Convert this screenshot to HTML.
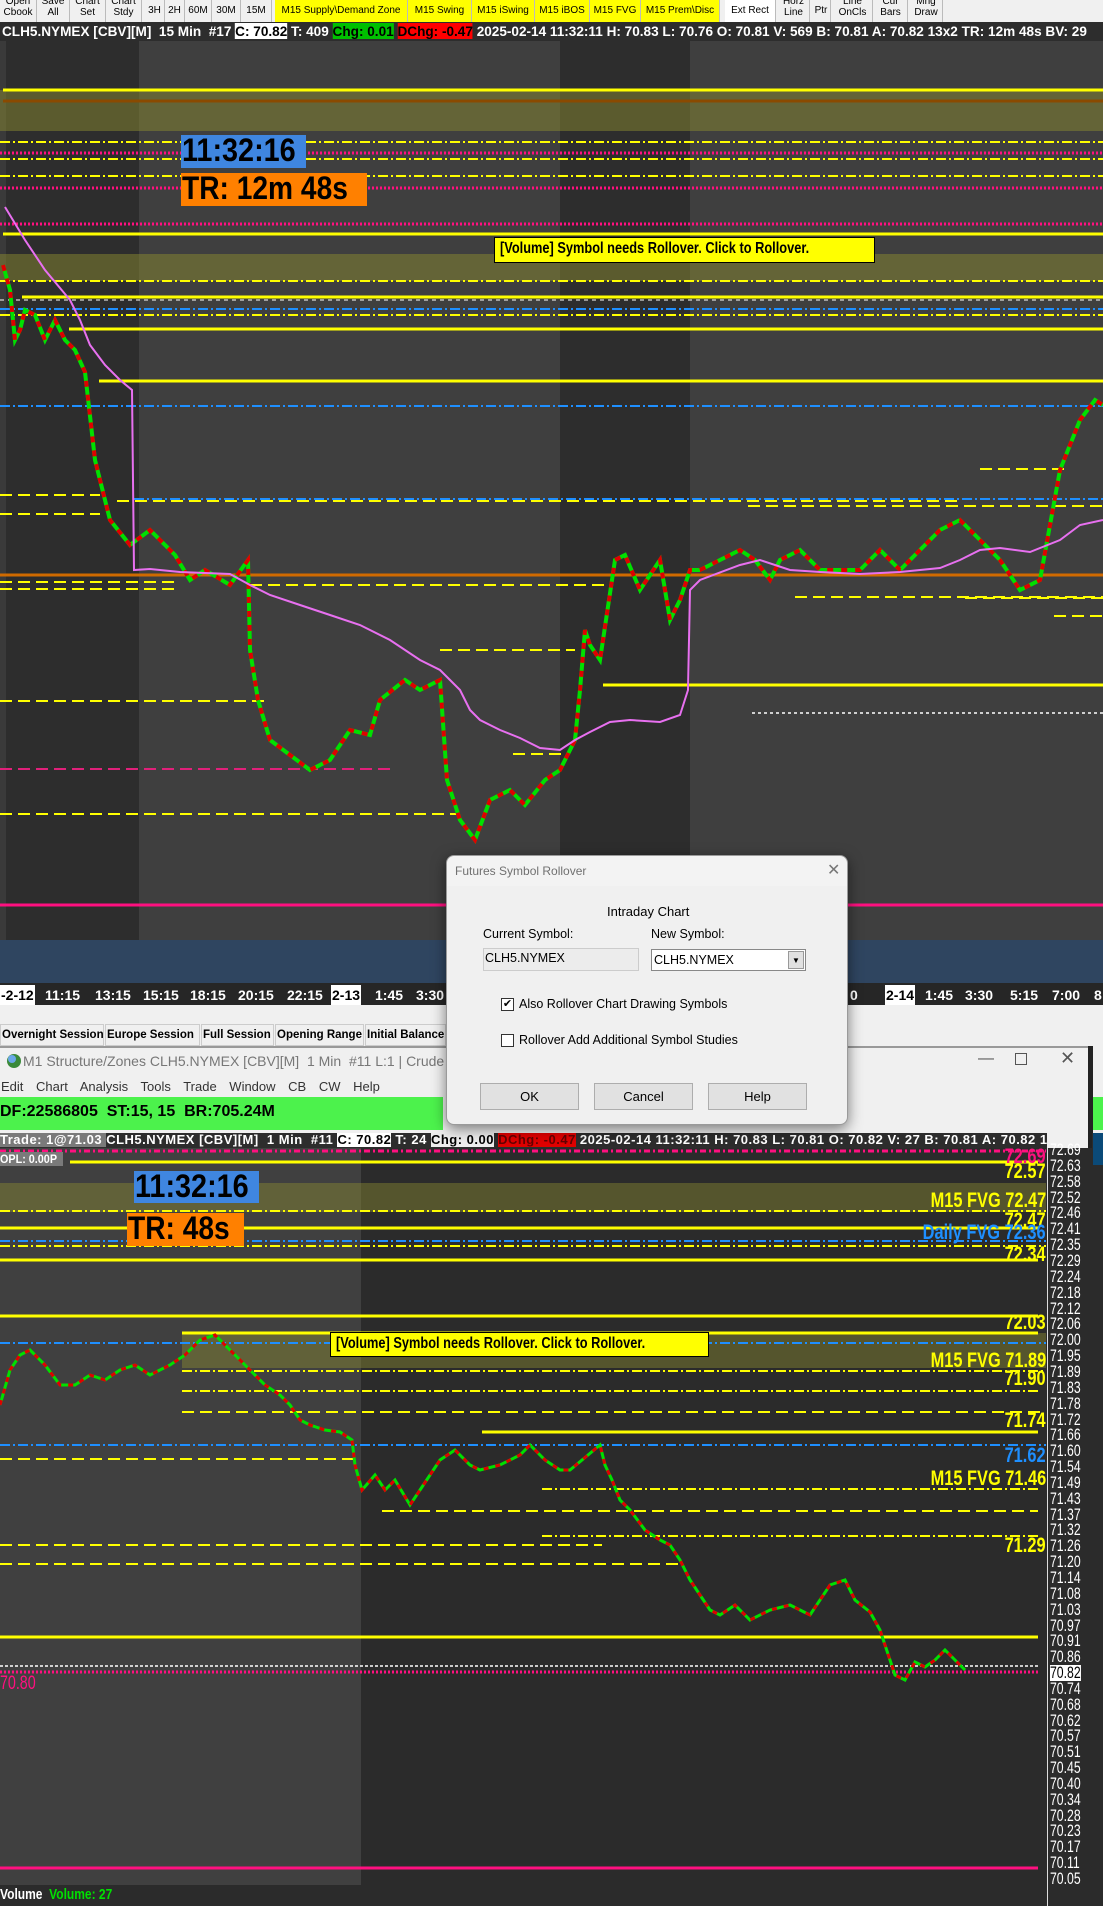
<!DOCTYPE html>
<html><head><meta charset="utf-8">
<style>
*{margin:0;padding:0;box-sizing:border-box}
body{width:1103px;height:1906px;overflow:hidden;background:#2b2b2b;position:relative;font-family:"Liberation Sans",sans-serif}
.a{position:absolute;white-space:nowrap}
.tb{position:absolute;top:0;height:22px;background:#f0f0f0;border-right:1px solid #bbb;font-size:10px;line-height:11px;text-align:center;color:#000;overflow:hidden;white-space:nowrap}
.tb span{display:block;margin-top:-4px}
.y{background:#ffff00}
.hdr{font-weight:bold;font-size:13px;color:#fff;line-height:19px;height:19px}
.lab{position:absolute;font-weight:bold;font-size:21px;color:#ffff00;transform:scaleX(.78);transform-origin:right center;right:57px;white-space:nowrap;line-height:22px}
.ax{position:absolute;left:1050px;font-size:17px;color:#fff;transform:scaleX(.72);transform-origin:left center;line-height:16px}
.sb{position:absolute;top:1024px;height:22px;background:#f0f0f0;border:1px solid #ccc;font-size:11.5px;font-weight:bold;line-height:20px;padding:0 1px;white-space:nowrap;overflow:hidden}
.btn{position:absolute;top:1083px;width:99px;height:27px;background:#e1e1e1;border:1px solid #adadad;font-size:13px;text-align:center;line-height:25px}
.chk{position:absolute;width:13px;height:13px;border:1px solid #333;background:#fff;font-size:11px;line-height:11px;text-align:center}
</style></head><body>

<svg class="a" style="left:0;top:0" width="1103" height="1906">
<rect x="0" y="41" width="1103" height="944" fill="#3f3f3f"/>
<rect x="0" y="41" width="139" height="944" fill="#2d2d2d"/>
<rect x="560" y="41" width="130" height="944" fill="#2d2d2d"/>
<rect x="0" y="41" width="6" height="944" fill="#3a3a3a"/>
<rect x="0" y="90" width="1103" height="41" fill="#8a8a30" opacity="0.5"/>
<rect x="0" y="254" width="1103" height="27" fill="#8a8a30" opacity="0.5"/>
<g stroke-width="2" fill="none">
<line x1="3" y1="90" x2="1103" y2="90" stroke="#ffff00" stroke-width="3"/>
<line x1="3" y1="101" x2="1103" y2="101" stroke="#8a4a00" stroke-width="3"/>
<line x1="0" y1="142" x2="1103" y2="142" stroke="#ffff00" stroke-dasharray="10 3 2 3"/>
<line x1="0" y1="153" x2="1103" y2="153" stroke="#ff1080" stroke-width="3" stroke-dasharray="2 2"/>
<line x1="0" y1="159" x2="1103" y2="159" stroke="#ffff00" stroke-dasharray="10 3 2 3"/>
<line x1="0" y1="176" x2="1103" y2="176" stroke="#ffff00" stroke-dasharray="10 3 2 3"/>
<line x1="0" y1="188" x2="1103" y2="188" stroke="#ff1080" stroke-width="3" stroke-dasharray="2 2"/>
<line x1="0" y1="224" x2="1103" y2="224" stroke="#ff1080" stroke-width="3" stroke-dasharray="2 2"/>
<line x1="3" y1="234" x2="1103" y2="234" stroke="#ffff00" stroke-width="3"/>
<line x1="0" y1="281" x2="1103" y2="281" stroke="#ffff00" stroke-dasharray="10 3 2 3"/>
<line x1="22" y1="297" x2="1103" y2="297" stroke="#ffff00" stroke-width="3"/>
<line x1="0" y1="300" x2="1103" y2="300" stroke="#ffffff" stroke-width="1" stroke-dasharray="4 4"/>
<line x1="0" y1="309" x2="1103" y2="309" stroke="#1e8fff" stroke-dasharray="10 3 2 3"/>
<line x1="0" y1="315" x2="1103" y2="315" stroke="#ffff00" stroke-dasharray="10 3 2 3"/>
<line x1="69" y1="329" x2="1103" y2="329" stroke="#ffff00" stroke-width="3"/>
<line x1="99" y1="381" x2="1103" y2="381" stroke="#ffff00" stroke-width="3"/>
<line x1="0" y1="406" x2="1103" y2="406" stroke="#1e8fff" stroke-dasharray="10 3 2 3"/>
<line x1="134" y1="499" x2="1103" y2="499" stroke="#1e8fff" stroke-dasharray="10 3 2 3"/>
<line x1="117" y1="501" x2="960" y2="501" stroke="#ffff00" stroke-dasharray="12 6"/>
<line x1="0" y1="495" x2="100" y2="495" stroke="#ffff00" stroke-dasharray="12 6"/>
<line x1="0" y1="514" x2="100" y2="514" stroke="#ffff00" stroke-dasharray="12 6"/>
<line x1="748" y1="506" x2="1103" y2="506" stroke="#ffff00" stroke-dasharray="12 6"/>
<line x1="980" y1="469" x2="1070" y2="469" stroke="#ffff00" stroke-dasharray="12 6"/>
<line x1="0" y1="575" x2="1103" y2="575" stroke="#d06a00" stroke-width="3"/>
<line x1="0" y1="582" x2="175" y2="582" stroke="#ffff00" stroke-dasharray="12 6"/>
<line x1="0" y1="589" x2="175" y2="589" stroke="#ffff00" stroke-dasharray="12 6"/>
<line x1="250" y1="585" x2="610" y2="585" stroke="#ffff00" stroke-dasharray="12 6"/>
<line x1="795" y1="597" x2="1103" y2="597" stroke="#ffff00" stroke-dasharray="12 6"/>
<line x1="965" y1="598" x2="1103" y2="598" stroke="#ffff00" stroke-dasharray="12 6"/>
<line x1="1054" y1="616" x2="1103" y2="616" stroke="#ffff00" stroke-dasharray="12 6"/>
<line x1="440" y1="650" x2="575" y2="650" stroke="#ffff00" stroke-dasharray="12 6"/>
<line x1="603" y1="685" x2="1103" y2="685" stroke="#ffff00" stroke-width="3"/>
<line x1="752" y1="713" x2="1103" y2="713" stroke="#ffffff" stroke-width="1.5" stroke-dasharray="3 3"/>
<line x1="0" y1="701" x2="265" y2="701" stroke="#ffff00" stroke-dasharray="12 6"/>
<line x1="513" y1="754" x2="570" y2="754" stroke="#ffff00" stroke-dasharray="12 6"/>
<line x1="0" y1="769" x2="390" y2="769" stroke="#e0207a" stroke-dasharray="12 6"/>
<line x1="0" y1="814" x2="460" y2="814" stroke="#ffff00" stroke-dasharray="12 6"/>
<line x1="0" y1="905" x2="1103" y2="905" stroke="#ff1080" stroke-width="3"/>
</g>
<rect x="0" y="940" width="1103" height="43" fill="#2f4560"/>
<polyline fill="none" stroke="#00e000" stroke-width="4" points="3,265 10,290 15,340 20,330 25,310 35,315 45,340 55,320 65,340 75,350 85,372 95,460 110,520 130,545 150,530 175,555 190,580 205,570 230,585 248,560 250,650 258,700 270,740 290,755 310,770 330,760 350,730 370,735 380,700 405,680 420,690 440,680 447,780 460,820 475,840 490,800 510,790 525,805 545,780 560,770 575,740 580,690 585,630 590,645 600,660 615,560 625,555 640,590 660,560 670,620 680,600 690,570 700,570 720,560 740,550 755,560 770,580 780,560 800,550 820,570 860,570 880,550 900,570 940,530 960,520 980,540 1000,560 1020,590 1040,580 1060,470 1080,420 1095,400 1103,405"/>
<polyline fill="none" stroke="#e00000" stroke-width="4" stroke-dasharray="6 8" points="3,265 10,290 15,340 20,330 25,310 35,315 45,340 55,320 65,340 75,350 85,372 95,460 110,520 130,545 150,530 175,555 190,580 205,570 230,585 248,560 250,650 258,700 270,740 290,755 310,770 330,760 350,730 370,735 380,700 405,680 420,690 440,680 447,780 460,820 475,840 490,800 510,790 525,805 545,780 560,770 575,740 580,690 585,630 590,645 600,660 615,560 625,555 640,590 660,560 670,620 680,600 690,570 700,570 720,560 740,550 755,560 770,580 780,560 800,550 820,570 860,570 880,550 900,570 940,530 960,520 980,540 1000,560 1020,590 1040,580 1060,470 1080,420 1095,400 1103,405"/>
<polyline fill="none" stroke="#e870f0" stroke-width="2" points="5,207 25,240 45,270 70,300 80,320 90,345 105,365 120,380 132,390 134,570 150,569 180,572 230,574 250,585 270,595 300,605 330,615 360,625 390,640 420,660 440,670 460,690 470,710 480,720 500,730 520,738 540,748 560,750 575,740 590,732 610,722 630,720 660,722 680,715 688,690 690,590 700,580 740,565 760,560 790,570 820,572 860,574 900,572 940,568 960,560 980,550 1000,548 1030,552 1060,540 1080,525 1103,520"/>
<rect x="0" y="983" width="1103" height="22" fill="#262626"/>
<rect x="0" y="1005" width="1103" height="143" fill="#f0f0f0"/>
<rect x="0" y="1046" width="1090" height="2" fill="#999"/>
<rect x="0" y="1097" width="443" height="33" fill="#4cf24c"/>
<rect x="1088" y="1046" width="5" height="102" fill="#222"/>
<rect x="1093" y="1097" width="10" height="33" fill="#4cf24c"/>
<rect x="0" y="1148" width="1047" height="758" fill="#2b2b2b"/>
<rect x="0" y="1148" width="361" height="737" fill="#404040"/>
<rect x="0" y="1183" width="1046" height="29" fill="#8a8a30" opacity="0.45"/>
<rect x="182" y="1333" width="864" height="35" fill="#8a8a30" opacity="0.45"/>
<rect x="1047" y="1148" width="1" height="758" fill="#ddd"/>
<rect x="1092" y="1133" width="11" height="773" fill="#2b2b2b"/>
<rect x="1093" y="1133" width="10" height="32" fill="#0b4a78"/>
<g stroke-width="2" fill="none">
<line x1="0" y1="1151" x2="1046" y2="1151" stroke="#ff1080" stroke-width="3" stroke-dasharray="6 3 2 3"/>
<line x1="70" y1="1162" x2="1038" y2="1162" stroke="#ffff00" stroke-width="3"/>
<line x1="0" y1="1211" x2="1046" y2="1211" stroke="#ffff00" stroke-dasharray="10 3 2 3"/>
<line x1="0" y1="1228" x2="1038" y2="1228" stroke="#ffff00" stroke-width="3"/>
<line x1="0" y1="1241" x2="1046" y2="1241" stroke="#1e8fff" stroke-dasharray="10 3 2 3"/>
<line x1="0" y1="1246" x2="1046" y2="1246" stroke="#ffff00" stroke-dasharray="10 3 2 3"/>
<line x1="0" y1="1260" x2="1038" y2="1260" stroke="#ffff00" stroke-width="3"/>
<line x1="0" y1="1316" x2="1038" y2="1316" stroke="#ffff00" stroke-width="3"/>
<line x1="182" y1="1333" x2="1038" y2="1333" stroke="#ffff00" stroke-width="3"/>
<line x1="0" y1="1343" x2="1046" y2="1343" stroke="#1e8fff" stroke-dasharray="10 3 2 3"/>
<line x1="182" y1="1371" x2="1046" y2="1371" stroke="#ffff00" stroke-dasharray="10 3 2 3"/>
<line x1="182" y1="1391" x2="1038" y2="1391" stroke="#ffff00" stroke-dasharray="10 3 2 3"/>
<line x1="182" y1="1412" x2="1046" y2="1412" stroke="#ffff00" stroke-dasharray="12 6"/>
<line x1="482" y1="1432" x2="1038" y2="1432" stroke="#ffff00" stroke-width="3"/>
<line x1="0" y1="1445" x2="1046" y2="1445" stroke="#1e8fff" stroke-dasharray="10 3 2 3"/>
<line x1="0" y1="1459" x2="355" y2="1459" stroke="#ffff00" stroke-dasharray="12 6"/>
<line x1="542" y1="1489" x2="1038" y2="1489" stroke="#ffff00" stroke-dasharray="10 3 2 3"/>
<line x1="382" y1="1511" x2="1038" y2="1511" stroke="#ffff00" stroke-dasharray="12 6"/>
<line x1="542" y1="1536" x2="1038" y2="1536" stroke="#ffff00" stroke-dasharray="10 3 2 3"/>
<line x1="0" y1="1545" x2="602" y2="1545" stroke="#ffff00" stroke-dasharray="12 6"/>
<line x1="0" y1="1564" x2="680" y2="1564" stroke="#ffff00" stroke-dasharray="12 6"/>
<line x1="0" y1="1637" x2="1038" y2="1637" stroke="#ffff00" stroke-width="3"/>
<line x1="0" y1="1666" x2="1038" y2="1666" stroke="#ffffff" stroke-width="1.5" stroke-dasharray="3 2"/>
<line x1="0" y1="1672" x2="1038" y2="1672" stroke="#ff1080" stroke-width="3" stroke-dasharray="2 2"/>
<line x1="0" y1="1868" x2="1038" y2="1868" stroke="#ff1080" stroke-width="3"/>
</g>
<polyline fill="none" stroke="#00e000" stroke-width="3" points="0,1405 10,1370 20,1355 30,1350 45,1365 60,1385 75,1385 90,1375 105,1380 120,1370 135,1365 150,1375 170,1365 185,1355 200,1340 215,1335 235,1355 250,1370 265,1385 280,1395 290,1405 300,1420 310,1425 325,1430 340,1432 352,1440 355,1465 362,1490 375,1475 385,1490 395,1480 410,1505 420,1490 440,1460 455,1450 470,1465 480,1470 500,1465 520,1455 530,1445 545,1460 560,1470 570,1470 600,1445 605,1465 612,1480 620,1500 630,1510 645,1530 660,1540 670,1545 680,1560 690,1580 700,1595 710,1610 720,1615 735,1605 750,1620 770,1610 790,1605 810,1615 830,1585 845,1580 855,1600 870,1612 880,1630 890,1660 895,1675 905,1680 915,1662 925,1667 935,1660 945,1650 955,1660 965,1670"/>
<polyline fill="none" stroke="#e00000" stroke-width="3" stroke-dasharray="5 7" points="0,1405 10,1370 20,1355 30,1350 45,1365 60,1385 75,1385 90,1375 105,1380 120,1370 135,1365 150,1375 170,1365 185,1355 200,1340 215,1335 235,1355 250,1370 265,1385 280,1395 290,1405 300,1420 310,1425 325,1430 340,1432 352,1440 355,1465 362,1490 375,1475 385,1490 395,1480 410,1505 420,1490 440,1460 455,1450 470,1465 480,1470 500,1465 520,1455 530,1445 545,1460 560,1470 570,1470 600,1445 605,1465 612,1480 620,1500 630,1510 645,1530 660,1540 670,1545 680,1560 690,1580 700,1595 710,1610 720,1615 735,1605 750,1620 770,1610 790,1605 810,1615 830,1585 845,1580 855,1600 870,1612 880,1630 890,1660 895,1675 905,1680 915,1662 925,1667 935,1660 945,1650 955,1660 965,1670"/>
<circle cx="14" cy="1061" r="7" fill="#3a8a3a"/><circle cx="12" cy="1059" r="4" fill="#6aa8e8"/>
</svg>

<div class="a" style="left:0;top:0;width:1103px;height:22px;background:#f0f0f0"></div>
<div class="tb" style="left:0;width:37px"><span>Open<br>Cbook</span></div>
<div class="tb" style="left:37px;width:33px"><span>Save<br>All</span></div>
<div class="tb" style="left:70px;width:36px"><span>Chart<br>Set</span></div>
<div class="tb" style="left:106px;width:36px"><span>Chart<br>Stdy</span></div>
<div class="tb" style="left:145px;width:20px;line-height:22px">3H</div>
<div class="tb" style="left:165px;width:20px;line-height:22px">2H</div>
<div class="tb" style="left:185px;width:27px;line-height:22px">60M</div>
<div class="tb" style="left:212px;width:29px;line-height:22px">30M</div>
<div class="tb" style="left:241px;width:31px;line-height:22px">15M</div>
<div class="tb y" style="left:275px;width:133px;line-height:22px">M15 Supply\Demand Zone</div>
<div class="tb y" style="left:408px;width:64px;line-height:22px">M15 Swing</div>
<div class="tb y" style="left:472px;width:63px;line-height:22px">M15 iSwing</div>
<div class="tb y" style="left:535px;width:55px;line-height:22px">M15 iBOS</div>
<div class="tb y" style="left:590px;width:51px;line-height:22px">M15 FVG</div>
<div class="tb y" style="left:641px;width:79px;line-height:22px">M15 Prem\Disc</div>
<div class="tb" style="left:725px;width:51px;line-height:22px;background:#fff">Ext Rect</div>
<div class="tb" style="left:778px;width:32px"><span>Horz<br>Line</span></div>
<div class="tb" style="left:812px;width:19px;line-height:22px">Ptr</div>
<div class="tb" style="left:833px;width:40px"><span>Line<br>OnCls</span></div>
<div class="tb" style="left:874px;width:34px"><span>Cur<br>Bars</span></div>
<div class="tb" style="left:910px;width:33px"><span>Mng<br>Draw</span></div>

<div class="a" style="left:0;top:22px;width:1103px;height:19px;background:#2d2d2d;overflow:hidden">
<div class="a hdr" style="left:2px;top:0;font-size:14px;transform:scaleX(.97);transform-origin:left">CLH5.NYMEX [CBV][M]&nbsp; 15 Min&nbsp; #17 <span style="background:#fff;color:#000">C: 70.82</span> T: 409 <span style="background:#00c000;color:#000">Chg: 0.01</span> <span style="background:#f00;color:#000">DChg: -0.47</span> 2025-02-14 11:32:11 H: 70.83 L: 70.76 O: 70.81 V: 569 B: 70.81 A: 70.82 13x2 TR: 12m 48s BV: 29</div>
</div>

<div class="a" style="left:181px;top:135px;width:125px;height:33px;background:#3f86e0"></div>
<div class="a" style="left:182px;top:132px;font-size:32px;font-weight:bold;color:#000;transform:scaleX(.9);transform-origin:left">11:32:16</div>
<div class="a" style="left:181px;top:173px;width:186px;height:33px;background:#ff8000"></div>
<div class="a" style="left:182px;top:170px;font-size:32px;font-weight:bold;color:#000;transform:scaleX(.88);transform-origin:left">TR: 12m 48s</div>
<div class="a" style="left:494px;top:237px;width:381px;height:26px;background:#ffff00;border:1px solid #000"></div>
<div class="a" style="left:500px;top:240px;font-size:16px;font-weight:bold;color:#000;transform:scaleX(.8);transform-origin:left">[Volume] Symbol needs Rollover. Click to Rollover.</div>

<div class="a" style="left:0;top:985px;width:1103px;height:20px;font-size:14px;font-weight:bold;color:#fff;line-height:20px">
<span class="a" style="left:0;background:#fff;color:#000;padding:0 1px">-2-12</span>
<span class="a" style="left:45px">11:15</span><span class="a" style="left:95px">13:15</span><span class="a" style="left:143px">15:15</span><span class="a" style="left:190px">18:15</span><span class="a" style="left:238px">20:15</span><span class="a" style="left:287px">22:15</span>
<span class="a" style="left:331px;background:#fff;color:#000;padding:0 1px">2-13</span>
<span class="a" style="left:375px">1:45</span><span class="a" style="left:416px">3:30</span><span class="a" style="left:850px">0</span>
<span class="a" style="left:885px;background:#fff;color:#000;padding:0 1px">2-14</span>
<span class="a" style="left:925px">1:45</span><span class="a" style="left:965px">3:30</span><span class="a" style="left:1010px">5:15</span><span class="a" style="left:1052px">7:00</span><span class="a" style="left:1094px">8</span>
</div>

<div class="sb" style="left:0;width:104px">Overnight Session</div>
<div class="sb" style="left:105px;width:95px">Europe Session</div>
<div class="sb" style="left:201px;width:73px">Full Session</div>
<div class="sb" style="left:275px;width:89px">Opening Range</div>
<div class="sb" style="left:365px;width:81px">Initial Balance</div>

<div class="a" style="left:23px;top:1053px;font-size:14px;color:#777">M1 Structure/Zones CLH5.NYMEX [CBV][M]&nbsp; 1 Min&nbsp; #11 L:1 | Crude Oil WTI - NYM</div>
<div class="a" style="left:978px;top:1050px;font-size:16px;color:#555">—</div>
<div class="a" style="left:1015px;top:1053px;width:12px;height:12px;border:1px solid #555"></div>
<div class="a" style="left:1060px;top:1048px;font-size:18px;color:#555">✕</div>
<div class="a" style="left:1px;top:1079px;font-size:13px;color:#333;word-spacing:9px">Edit Chart Analysis Tools Trade Window CB CW Help</div>
<div class="a" style="left:0;top:1103px;font-size:16px;font-weight:bold;color:#000">DF:22586805&nbsp; ST:15, 15&nbsp; BR:705.24M</div>

<div class="a" style="left:0;top:1133px;width:1047px;height:15px;background:#2d2d2d;overflow:hidden">
<div class="a" style="left:0;top:-2px;font-size:13px;font-weight:bold;color:#fff;letter-spacing:.5px;line-height:18px"><span style="background:#7a7a7a">Trade: 1@71.03 </span> CLH5.NYMEX [CBV][M]&nbsp; 1 Min&nbsp; #11 <span style="background:#fff;color:#000">C: 70.82</span> T: 24 <span style="background:#eee;color:#000">Chg: 0.00</span> <span style="background:#e00000;color:#600">DChg: -0.47</span> 2025-02-14 11:32:11 H: 70.83 L: 70.81 O: 70.82 V: 27 B: 70.81 A: 70.82 13</div>
</div>
<div class="a" style="left:0;top:1152px;width:70px;height:14px;background:#7a7a7a;font-size:12px;font-weight:bold;color:#fff;line-height:14px;transform:scaleX(.9);transform-origin:left">OPL: 0.00P</div>

<div class="a" style="left:134px;top:1171px;width:125px;height:32px;background:#3f86e0"></div>
<div class="a" style="left:135px;top:1168px;font-size:32px;font-weight:bold;color:#000;transform:scaleX(.9);transform-origin:left">11:32:16</div>
<div class="a" style="left:127px;top:1213px;width:117px;height:33px;background:#ff8000"></div>
<div class="a" style="left:128px;top:1210px;font-size:32px;font-weight:bold;color:#000;transform:scaleX(.88);transform-origin:left">TR: 48s</div>
<div class="a" style="left:330px;top:1332px;width:379px;height:25px;background:#ffff00;border:1px solid #000"></div>
<div class="a" style="left:336px;top:1335px;font-size:16px;font-weight:bold;color:#000;transform:scaleX(.8);transform-origin:left">[Volume] Symbol needs Rollover. Click to Rollover.</div>
<div class="a" style="left:0;top:1673px;font-size:19px;color:#ff1080;transform:scaleX(.75);transform-origin:left">70.80</div>
<div class="a" style="left:0;top:1886px;font-size:15px;font-weight:bold;color:#fff;transform:scaleX(.8);transform-origin:left">Volume&nbsp; <span style="color:#00e000">Volume: 27</span></div>

<div class="lab" style="top:1146px;color:#ff1080">72.69</div>
<div class="lab" style="top:1161px">72.57</div>
<div class="lab" style="top:1190px">M15 FVG 72.47</div>
<div class="lab" style="top:1210px">72.47</div>
<div class="lab" style="top:1222px;color:#1e8fff">Daily FVG 72.36</div>
<div class="lab" style="top:1244px">72.34</div>
<div class="lab" style="top:1312px">72.03</div>
<div class="lab" style="top:1350px">M15 FVG 71.89</div>
<div class="lab" style="top:1368px">71.90</div>
<div class="lab" style="top:1410px">71.74</div>
<div class="lab" style="top:1445px;color:#1e8fff">71.62</div>
<div class="lab" style="top:1468px">M15 FVG 71.46</div>
<div class="lab" style="top:1535px">71.29</div>

<div class="ax" style="top:1142px">72.69</div><div class="ax" style="top:1158px">72.63</div><div class="ax" style="top:1174px">72.58</div><div class="ax" style="top:1190px">72.52</div><div class="ax" style="top:1205px">72.46</div><div class="ax" style="top:1221px">72.41</div><div class="ax" style="top:1237px">72.35</div><div class="ax" style="top:1253px">72.29</div><div class="ax" style="top:1269px">72.24</div><div class="ax" style="top:1285px">72.18</div><div class="ax" style="top:1301px">72.12</div><div class="ax" style="top:1316px">72.06</div><div class="ax" style="top:1332px">72.00</div><div class="ax" style="top:1348px">71.95</div><div class="ax" style="top:1364px">71.89</div><div class="ax" style="top:1380px">71.83</div><div class="ax" style="top:1396px">71.78</div><div class="ax" style="top:1412px">71.72</div><div class="ax" style="top:1427px">71.66</div><div class="ax" style="top:1443px">71.60</div><div class="ax" style="top:1459px">71.54</div><div class="ax" style="top:1475px">71.49</div><div class="ax" style="top:1491px">71.43</div><div class="ax" style="top:1507px">71.37</div><div class="ax" style="top:1522px">71.32</div><div class="ax" style="top:1538px">71.26</div><div class="ax" style="top:1554px">71.20</div><div class="ax" style="top:1570px">71.14</div><div class="ax" style="top:1586px">71.08</div><div class="ax" style="top:1602px">71.03</div><div class="ax" style="top:1618px">70.97</div><div class="ax" style="top:1633px">70.91</div><div class="ax" style="top:1649px">70.86</div><div class="ax" style="top:1665px;background:#fff;color:#000">70.82</div><div class="ax" style="top:1681px">70.74</div><div class="ax" style="top:1697px">70.68</div><div class="ax" style="top:1713px">70.62</div><div class="ax" style="top:1728px">70.57</div><div class="ax" style="top:1744px">70.51</div><div class="ax" style="top:1760px">70.45</div><div class="ax" style="top:1776px">70.40</div><div class="ax" style="top:1792px">70.34</div><div class="ax" style="top:1808px">70.28</div><div class="ax" style="top:1823px">70.23</div><div class="ax" style="top:1839px">70.17</div><div class="ax" style="top:1855px">70.11</div><div class="ax" style="top:1871px">70.05</div>

<div class="a" style="left:446px;top:855px;width:402px;height:270px;background:#f0f0f0;border:1px solid #9a9a9a;border-radius:8px;box-shadow:0 4px 14px rgba(0,0,0,.5)">
<div class="a" style="left:0;top:0;width:400px;height:30px;background:#f3f3f3;border-radius:8px 8px 0 0"></div>
<div class="a" style="left:8px;top:8px;font-size:12px;color:#707070">Futures Symbol Rollover</div>
<div class="a" style="left:380px;top:4px;font-size:16px;color:#777">✕</div>
<div class="a" style="left:160px;top:48px;font-size:13px;color:#000">Intraday Chart</div>
<div class="a" style="left:36px;top:71px;font-size:12.5px;color:#000">Current Symbol:</div>
<div class="a" style="left:36px;top:92px;width:156px;height:23px;border:1px solid #ccc;background:#ececec;font-size:12.5px;padding:2px 1px">CLH5.NYMEX</div>
<div class="a" style="left:204px;top:71px;font-size:12.5px;color:#000">New Symbol:</div>
<div class="a" style="left:204px;top:93px;width:155px;height:22px;border:1px solid #888;background:#fff;font-size:12.5px;padding:3px 2px">CLH5.NYMEX</div>
<div class="a" style="left:341px;top:95px;width:16px;height:18px;background:#e1e1e1;border:1px solid #999;font-size:8px;text-align:center;line-height:18px">▼</div>
<div class="chk" style="left:54px;top:142px">✔</div>
<div class="a" style="left:72px;top:141px;font-size:12.5px">Also Rollover Chart Drawing Symbols</div>
<div class="chk" style="left:54px;top:178px"></div>
<div class="a" style="left:72px;top:177px;font-size:12.5px">Rollover Add Additional Symbol Studies</div>
</div>
<div class="btn" style="left:480px">OK</div>
<div class="btn" style="left:594px">Cancel</div>
<div class="btn" style="left:708px">Help</div>
</body></html>
